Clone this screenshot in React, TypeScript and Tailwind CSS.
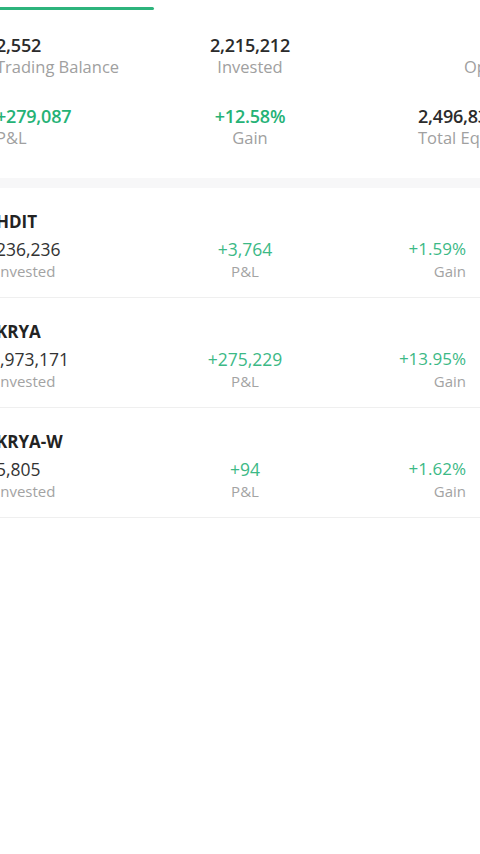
const font = { fontFamily: '"Open Sans", "Liberation Sans", sans-serif' };

const holdings = [
  { name: "HDIT", invested: "236,236", pnl: "+3,764", gain: "+1.59%" },
  { name: "KRYA", invested: "1,973,171", pnl: "+275,229", gain: "+13.95%", shift: true },
  { name: "KRYA-W", invested: "5,805", pnl: "+94", gain: "+1.62%" },
];

function SummaryCell({ value, label, green }: { value: string; label: string; green?: boolean }) {
  return (
    <>
      <div
        className={`text-[18px] leading-[24px] font-semibold tracking-[-0.2px] ${
          green ? "text-[#25b276]" : "text-[#2b2b2b]"
        }`}
      >
        {value}
      </div>
      <div className="text-[16.5px] leading-[20px] text-[#a0a0a0]">{label}</div>
    </>
  );
}

export default function App() {
  return (
    <div className="w-[480px] h-[854px] bg-white overflow-hidden" style={font}>
      {/* active tab indicator */}
      <div className="pt-[7px]">
        <div className="h-[3px] w-[154px] rounded-r-full bg-[#2db47c]" />
      </div>

      {/* summary */}
      <div className="pt-[23px] pb-[30px] -ml-[4px] w-[700px]">
        <div className="flex">
          <div className="w-[170px]">
            <SummaryCell value="2,552" label="Trading Balance" />
          </div>
          <div className="w-[168px] text-center">
            <SummaryCell value="2,215,212" label="Invested" />
          </div>
          <div className="pl-[84px]">
            <div className="w-[192px] text-center">
              <SummaryCell value="0" label="Open Orders" />
            </div>
          </div>
        </div>
        <div className="flex mt-[27px]">
          <div className="w-[170px]">
            <SummaryCell value="+279,087" label="P&L" green />
          </div>
          <div className="w-[168px] text-center">
            <SummaryCell value="+12.58%" label="Gain" green />
          </div>
          <div className="pl-[84px]">
            <SummaryCell value="2,496,839" label="Total Equity" />
          </div>
        </div>
      </div>

      <div className="h-[10px] bg-[#f7f7f8]" />

      {/* holdings list */}
      <div>
        {holdings.map((h) => (
          <div key={h.name} className="pt-[23px] pb-[15px] border-b border-[#efefef]">
            <div className="-ml-[4px] w-[470px]">
              <div className="text-[17px] leading-[22px] font-bold text-[#232323]">{h.name}</div>
              <div className="flex mt-[5px]">
                <div className="w-[199px]">
                  <div
                    className={`text-[17.5px] leading-[22px] text-[#333333] ${h.shift ? "-ml-[6px]" : ""}`}
                  >
                    {h.invested}
                  </div>
                  <div className="text-[15px] leading-[22px] text-[#a3a3a3]">Invested</div>
                </div>
                <div className="w-[100px] text-center">
                  <div className="text-[17.5px] leading-[22px] text-[#3cb986]">{h.pnl}</div>
                  <div className="text-[15px] leading-[22px] text-[#a3a3a3]">P&amp;L</div>
                </div>
                <div className="w-[171px] text-right">
                  <div className="text-[17px] leading-[22px] text-[#3cb986]">{h.gain}</div>
                  <div className="text-[15px] leading-[22px] text-[#a3a3a3]">Gain</div>
                </div>
              </div>
            </div>
          </div>
        ))}
      </div>
    </div>
  );
}
